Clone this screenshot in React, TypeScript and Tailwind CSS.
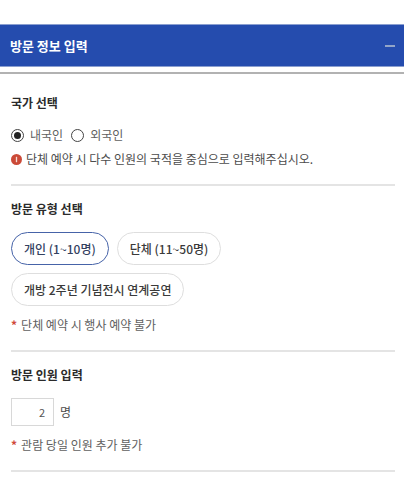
import { useState, type ReactNode } from "react";

const visitTypes = ["개인 (1~10명)", "단체 (11~50명)", "개방 2주년 기념전시 연계공연"];

function Section({ title, children }: { title: string; children: ReactNode }) {
  return (
    <section className="border-b-2 border-[#e4e4e4] pt-3.5 pb-4">
      <h2 className="text-[12px] leading-[18px] font-bold text-[#2b2b2b]">{title}</h2>
      {children}
    </section>
  );
}

function Note({ children }: { children: ReactNode }) {
  return (
    <p className="mt-2.5 flex gap-1 leading-[18px] text-[#606060]">
      <span className="font-bold text-[#d0483a]">*</span>
      {children}
    </p>
  );
}

export default function App() {
  const [open, setOpen] = useState(true);
  const [nation, setNation] = useState("내국인");
  const [type, setType] = useState(visitTypes[0]);
  const [count, setCount] = useState("2");

  return (
    <main className="bg-white pt-6 font-['Noto_Sans_CJK_KR',sans-serif] text-[12px]">
      <button
        type="button"
        aria-expanded={open}
        onClick={() => setOpen(!open)}
        className="flex h-[43px] w-full items-center justify-between border-y border-[#8b9fd0] bg-[#254cae] pr-[9px] pl-2.5 text-white"
      >
        <span className="text-[13px] leading-5 font-bold">방문 정보 입력</span>
        <span className="h-0.5 w-2.5 bg-[#93a5c8]" />
      </button>
      <div className="mt-[5px] border-t-2 border-[#b2b2b2]" />

      {open && (
        <form className="pt-1.5 pr-[9px] pl-[11px]">
          <Section title="국가 선택">
            <div className="mt-3.5 flex h-[18px] items-center gap-2">
              {["내국인", "외국인"].map((n) => (
                <label key={n} className="flex items-center gap-1.5 leading-[18px] text-[#606060]">
                  <input
                    type="radio"
                    name="nation"
                    checked={nation === n}
                    onChange={() => setNation(n)}
                    className="size-[13px] appearance-none rounded-full border border-[#444] bg-white bg-clip-content p-0.5 checked:bg-[#222]"
                  />
                  {n}
                </label>
              ))}
            </div>
            <p className="mt-1.5 flex items-center gap-1 leading-[18px] whitespace-nowrap text-[#4c4c4c]">
              <svg viewBox="0 0 11 11" className="size-[11px] shrink-0" aria-hidden="true">
                <circle cx="5.5" cy="5.5" r="5.5" fill="#cb4a38" />
                <path d="M5.5 2.8v5.4" stroke="#f6dcd6" strokeWidth="1.3" />
              </svg>
              단체 예약 시 다수 인원의 국적을 중심으로 입력해주십시오.
            </p>
          </Section>

          <Section title="방문 유형 선택">
            <div className="mt-3.5 flex flex-wrap gap-2">
              {visitTypes.map((t) => (
                <button
                  key={t}
                  type="button"
                  aria-pressed={type === t}
                  onClick={() => setType(t)}
                  className={
                    "h-[33px] rounded-full border px-3 leading-[18px] font-medium " +
                    (type === t ? "border-[#4663a8] text-[#33415f]" : "border-[#dedede] text-[#3a3a3a]")
                  }
                >
                  {t}
                </button>
              ))}
            </div>
            <Note>단체 예약 시 행사 예약 불가</Note>
          </Section>

          <Section title="방문 인원 입력">
            <div className="mt-3.5 flex items-center gap-1.5">
              <input
                id="count"
                inputMode="numeric"
                value={count}
                onChange={(e) => setCount(e.target.value)}
                className="h-7 w-[43px] border border-[#d8d8d8] bg-white pr-2 text-right text-[11px] text-[#555]"
              />
              <label htmlFor="count" className="leading-[18px] text-[#4c4c4c]">명</label>
            </div>
            <Note>관람 당일 인원 추가 불가</Note>
          </Section>
        </form>
      )}
    </main>
  );
}
